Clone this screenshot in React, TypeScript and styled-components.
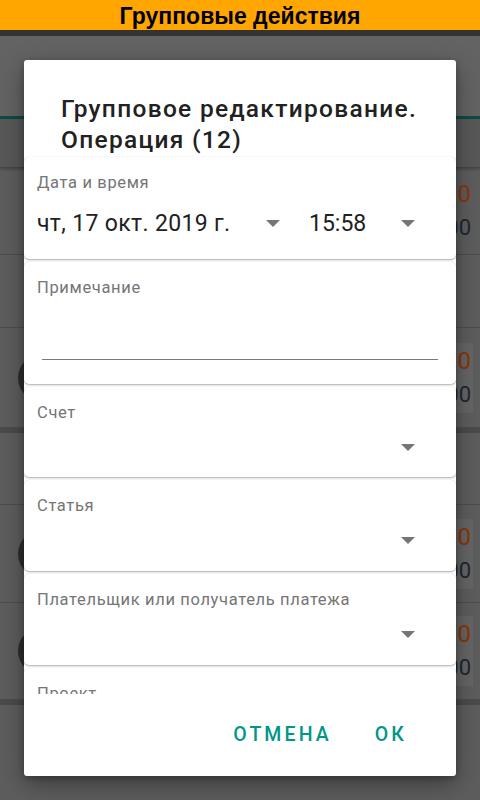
import React from "react";
import styled, { createGlobalStyle } from "styled-components";

const GlobalStyle = createGlobalStyle`
  html, body { margin: 0; padding: 0; }
  body {
    width: 480px;
    height: 800px;
    overflow: hidden;
    background: #5d5d5d;
    font-family: Roboto, "Noto Sans", sans-serif;
  }
`;

const Screen = styled.div`
  position: relative;
  width: 480px;
  height: 800px;
  overflow: hidden;
  background: #5d5d5d;
  display: flex;
  flex-direction: column;
`;

const Banner = styled.div`
  position: relative;
  z-index: 2;
  flex: none;
  height: 30px;
  background: #ffa600;
  color: #000;
  font-family: "Liberation Sans", Arial, sans-serif;
  font-weight: 700;
  font-size: 23px;
  line-height: 33px;
  text-align: center;
  white-space: nowrap;
`;

const DarkStrip = styled.div`
  flex: none;
  height: 6px;
  background: #333333;
`;

const AppBar = styled.div`
  flex: none;
  height: 80px;
  background: #636363;
`;

const TabLine = styled.div`
  flex: none;
  height: 3px;
  background: #0c4c46;
`;

const Summary = styled.div`
  flex: none;
  height: 48px;
  background: #585858;
  box-shadow: 0 2px 3px rgba(0, 0, 0, 0.3);
  position: relative;
  z-index: 1;
`;

const ListRow = styled.div<{ $h: number }>`
  flex: none;
  height: ${(p) => p.$h}px;
  box-sizing: border-box;
  border-bottom: 1px solid #4d4d4d;
  display: flex;
  align-items: center;
  justify-content: space-between;
  padding: 0 7px 0 18px;
`;

const Band = styled.div`
  flex: none;
  height: 5px;
  background: #4b4b4b;
`;

const Avatar = styled.div`
  width: 48px;
  height: 48px;
  border-radius: 50%;
  background: #2d2d2d;
`;

const Spacer = styled.div``;

const AmountBox = styled.div<{ $hl?: boolean }>`
  display: flex;
  flex-direction: column;
  align-items: flex-end;
  gap: 6px;
  padding: 4px 2px;
  background: ${(p) => (p.$hl ? "rgba(255,255,255,0.05)" : "transparent")};
`;

const Amount = styled.div<{ $tone: "out" | "total" }>`
  font-family: Roboto, sans-serif;
  font-size: ${(p) => (p.$tone === "out" ? 24 : 22)}px;
  line-height: 28px;
  color: ${(p) => (p.$tone === "out" ? "#8a3608" : "#1d2733")};
`;

const Dialog = styled.div`
  position: absolute;
  z-index: 3;
  top: 60px;
  left: 24px;
  width: 432px;
  height: 716px;
  background: #ffffff;
  border-radius: 3px;
  box-shadow: 0 8px 24px rgba(0, 0, 0, 0.35), 0 2px 6px rgba(0, 0, 0, 0.25);
  display: flex;
  flex-direction: column;
  overflow: hidden;
`;

const Title = styled.div`
  flex: none;
  padding: 33px 30px 0 37px;
  font-family: Roboto, sans-serif;
  font-weight: 500;
  font-size: 24.5px;
  letter-spacing: 1.3px;
  line-height: 31px;
  color: #212121;
  white-space: nowrap;
`;

const Content = styled.div`
  flex: 1;
  min-height: 0;
  overflow: hidden;
  padding-top: 2px;
  display: flex;
  flex-direction: column;
  gap: 3px;
`;

const Card = styled.div<{ $h: number }>`
  flex: none;
  height: ${(p) => p.$h}px;
  box-sizing: border-box;
  padding: 16px 13px 0;
  background: #ffffff;
  border-radius: 5px;
  box-shadow: 0 1px 2px rgba(0, 0, 0, 0.32), 0 0 1px rgba(0, 0, 0, 0.12);
`;

const Label = styled.div`
  font-family: Roboto, sans-serif;
  font-size: 16.5px;
  letter-spacing: 0.65px;
  line-height: 19px;
  color: #757575;
  white-space: nowrap;
`;

const DateRow = styled.div`
  margin-top: 7px;
  height: 49px;
  display: grid;
  grid-template-columns: 248px 111px;
  column-gap: 24px;
  align-items: center;
`;

const Spinner = styled.div`
  display: flex;
  align-items: center;
  justify-content: space-between;
  padding-right: 5px;
`;

const SpinnerValue = styled.span<{ $spacing?: number }>`
  font-family: Roboto, sans-serif;
  font-size: 23px;
  line-height: 28px;
  letter-spacing: ${(p) => p.$spacing ?? 0}px;
  color: #212121;
  white-space: nowrap;
`;

const EmptySpinner = styled.div`
  margin-top: 7px;
  height: 36px;
  display: flex;
  align-items: center;
  justify-content: flex-end;
  padding-right: 28px;
`;

const Caret = styled.span`
  width: 0;
  height: 0;
  border-left: 7px solid transparent;
  border-right: 7px solid transparent;
  border-top: 7px solid #757575;
`;

const NoteInput = styled.div`
  margin: 0 5px;
  height: 62px;
  border-bottom: 1.5px solid #7a7a7a;
`;

const Actions = styled.div`
  flex: none;
  height: 82px;
  display: flex;
  justify-content: flex-end;
  align-items: center;
  gap: 43px;
  padding-right: 49px;
`;

const TextButton = styled.button`
  background: none;
  border: none;
  padding: 0;
  margin: 0;
  font-family: Roboto, sans-serif;
  font-weight: 500;
  font-size: 19.5px;
  line-height: 24px;
  letter-spacing: 3.1px;
  color: #009688;
  cursor: pointer;
`;

type RowData = { h: number; avatar?: boolean; amounts?: [string, string]; hl?: boolean };

const rows: RowData[] = [
  { h: 88, amounts: ["1 200,00", "45 300,00"] },
  { h: 73 },
  { h: 100, avatar: true, amounts: ["350,00", "44 950,00"], hl: true },
];
const rows2: RowData[] = [
  { h: 72 },
  { h: 98, avatar: true, amounts: ["2 500,00", "42 450,00"], hl: true },
  { h: 97, avatar: true, amounts: ["800,00", "41 650,00"], hl: true },
];

function Row({ r }: { r: RowData }) {
  return (
    <ListRow $h={r.h}>
      {r.avatar ? <Avatar /> : <Spacer />}
      {r.amounts ? (
        <AmountBox $hl={r.hl}>
          <Amount $tone="out">{r.amounts[0]}</Amount>
          <Amount $tone="total">{r.amounts[1]}</Amount>
        </AmountBox>
      ) : null}
    </ListRow>
  );
}

function SelectCard({ label, h }: { label: string; h: number }) {
  return (
    <Card $h={h}>
      <Label>{label}</Label>
      <EmptySpinner>
        <Caret />
      </EmptySpinner>
    </Card>
  );
}

export default function App() {
  return (
    <>
      <GlobalStyle />
      <Screen>
        <Banner>Групповые действия</Banner>
        <DarkStrip />
        <AppBar />
        <TabLine />
        <Summary />
        {rows.map((r, i) => (
          <Row key={i} r={r} />
        ))}
        <Band />
        {rows2.map((r, i) => (
          <Row key={i} r={r} />
        ))}
        <Band />

        <Dialog>
          <Title>
            Групповое редактирование.
            <br />
            Операция (12)
          </Title>
          <Content>
            <Card $h={102}>
              <Label>Дата и время</Label>
              <DateRow>
                <Spinner>
                  <SpinnerValue $spacing={0.35}>чт, 17 окт. 2019 г.</SpinnerValue>
                  <Caret />
                </Spinner>
                <Spinner>
                  <SpinnerValue>15:58</SpinnerValue>
                  <Caret />
                </Spinner>
              </DateRow>
            </Card>
            <Card $h={122}>
              <Label>Примечание</Label>
              <NoteInput />
            </Card>
            <SelectCard label="Счет" h={90} />
            <SelectCard label="Статья" h={91} />
            <SelectCard label="Плательщик или получатель платежа" h={91} />
            <SelectCard label="Проект" h={90} />
          </Content>
          <Actions>
            <TextButton>ОТМЕНА</TextButton>
            <TextButton>ОК</TextButton>
          </Actions>
        </Dialog>
      </Screen>
    </>
  );
}
